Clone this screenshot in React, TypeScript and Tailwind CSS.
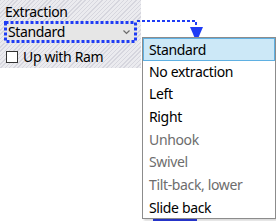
const OPTIONS = [
  { label: 'Standard', enabled: true },
  { label: 'No extraction', enabled: true },
  { label: 'Left', enabled: true },
  { label: 'Right', enabled: true },
  { label: 'Unhook', enabled: false },
  { label: 'Swivel', enabled: false },
  { label: 'Tilt-back, lower', enabled: false },
  { label: 'Slide back', enabled: true },
];

export default function App() {
  return (
    <div className="relative w-[276px] h-[221px] overflow-hidden bg-white text-[14px] tracking-[-0.35px] text-black font-['Noto_Sans',_'Liberation_Sans',_sans-serif]">
      <div className="w-[141px] h-[68px] pl-[5px] pt-[2px] flex flex-col bg-[repeating-linear-gradient(135deg,#d6d6de_0px,#d6d6de_1px,#ebebef_1px,#ebebef_3px)]">
        <div className="leading-[19px]">Extraction</div>
        <div className="relative -ml-[1px] w-[133px] h-[22px] bg-[#e6e6e6] flex items-center pl-[4px] leading-[20px]">
          Standard
          <svg className="absolute right-[7px] top-[9px]" width="7" height="5" viewBox="0 0 7 5">
            <path d="M0.5 0.5 L3.5 3.5 L6.5 0.5" stroke="#6b6b6b" strokeWidth="1.2" fill="none" />
          </svg>
          <svg className="absolute left-0 top-0" width="133" height="22" viewBox="0 0 133 22">
            <rect x="1.5" y="1.5" width="130" height="19" fill="none" stroke="#1f3cf5" strokeWidth="3" strokeDasharray="3 2" />
          </svg>
        </div>
        <label className="mt-[6px] flex items-center gap-[5px] leading-[16px]">
          <span className="ml-[1px] w-[12px] h-[12px] border border-[#333] bg-white" />
          Up with Ram
        </label>
      </div>

      <div className="absolute left-[153px] top-[219px] w-[44px] h-[2px] bg-[#2a3adf]" />

      <svg className="absolute left-[137px] top-[19px]" width="68" height="24" viewBox="0 0 68 24">
        <path d="M0 2 H59 V8" stroke="#1f3cf5" strokeWidth="2" fill="none" strokeDasharray="3 2" />
        <path d="M53 8 H66 L59.5 23 Z" fill="#1f3cf5" />
      </svg>

      <div className="absolute left-[142px] top-[37px] w-[134px] h-[182px] border border-[#8c8c8c] bg-white shadow-[2px_2px_2px_rgba(0,0,0,0.15)]">
        {OPTIONS.map((o, i) => (
          <div
            key={o.label}
            className={
              i === 0
                ? 'h-[22.7px] leading-[21px] pl-[5px] bg-[#cce8f7] border border-[#5fb0e2]'
                : 'h-[22.7px] leading-[22.7px] pl-[6px] ' + (o.enabled ? 'text-black' : 'text-[#6d6d6d]')
            }
          >
            {o.label}
          </div>
        ))}
      </div>
    </div>
  );
}
